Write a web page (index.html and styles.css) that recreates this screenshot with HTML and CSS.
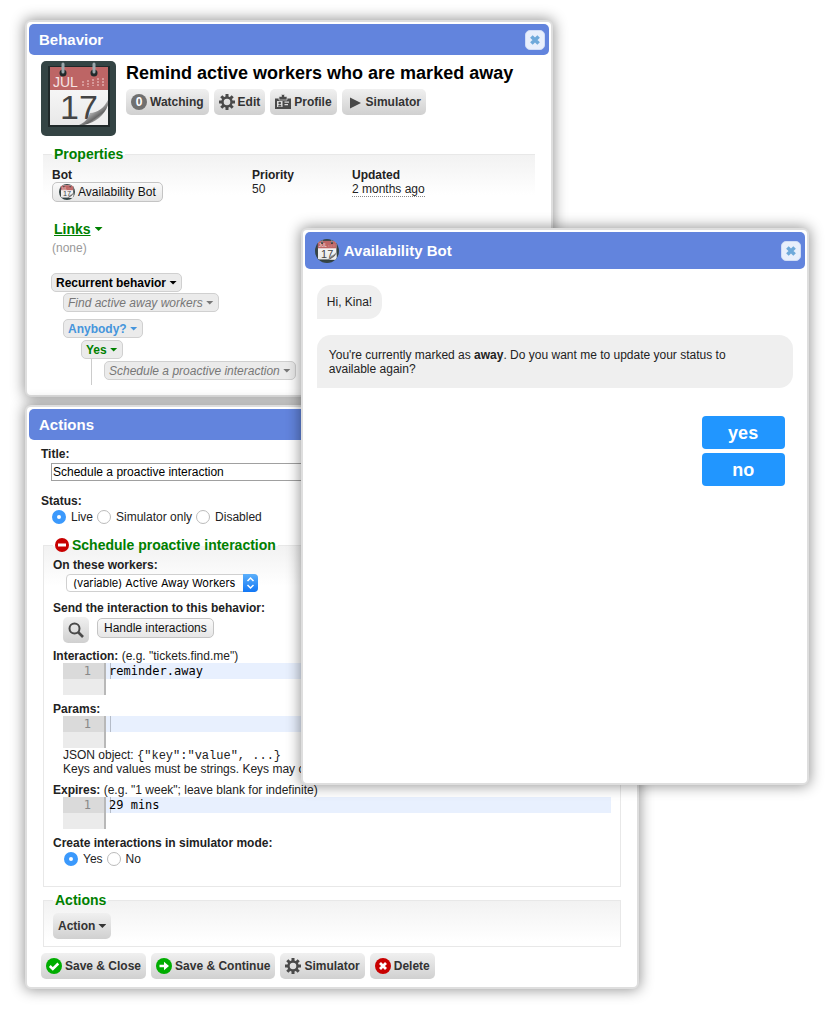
FILE: index.html
```html
<!DOCTYPE html>
<html lang="en">
<head>
<meta charset="utf-8">
<title>Behavior</title>
<link rel="stylesheet" href="styles.css">
</head>
<body>
<svg class="defs" aria-hidden="true">
  <defs>
    <linearGradient id="paper" x1="0" y1="0" x2="0" y2="1"><stop offset="0" stop-color="#fff"/><stop offset="1" stop-color="#e8e8e8"/></linearGradient>
    <linearGradient id="fold" x1="0.2" y1="0.2" x2="0.7" y2="0.8"><stop offset="0" stop-color="#e4e4e4"/><stop offset="0.5" stop-color="#aaa"/><stop offset="0.8" stop-color="#666"/><stop offset="1" stop-color="#ccc"/></linearGradient>
    <symbol id="calendar" viewBox="0 0 75 75">
      <rect width="75" height="75" fill="#344444"/>
      <rect x="7" y="5" width="62" height="61" fill="#20292a"/>
      <rect x="9" y="6" width="58" height="58" fill="url(#paper)"/>
      <rect x="9" y="6" width="58" height="23" fill="#bd6565"/>
      <text x="12" y="26" class="cal-month">JUL</text>
      <g stroke="#d79a9a" stroke-width="2" stroke-dasharray="2 1"><path d="M42 20v6M47 19v7M52 18v7M57 17v8M62 17v8"/></g>
      <text x="19" y="58" class="cal-day">17</text>
      <path d="M38 64C45 61 47 57 49 52C56 52 63 47 67 39V64Z" fill="url(#fold)"/>
      <path d="M43 64C55 61 63 55 67 44V64Z" fill="#efefef"/>
      <circle cx="22" cy="12" r="3.500" fill="#20292a"/><circle cx="53" cy="12" r="3.500" fill="#20292a"/>
      <path d="M22 3v8M53 3v8" stroke="#9aa6ab" stroke-width="3" stroke-linecap="round"/>
    </symbol>
    <symbol id="gear" viewBox="0 0 16 16">
      <g stroke="#4a4a4a" stroke-width="3"><path d="M8 0v4M8 12v4M0 8h4M12 8h4M2.300 2.300l3 3M10.700 10.700l3 3M13.700 2.300l-3 3M5.300 10.700l-3 3"/></g>
      <circle cx="8" cy="8" r="4.500" fill="none" stroke="#4a4a4a" stroke-width="2.400"/>
    </symbol>
    <symbol id="cross" viewBox="0 0 10 10"><path d="M2 2l6 6M8 2l-6 6" stroke="currentColor" stroke-width="3"/></symbol>
  </defs>
</svg>
<main class="desktop">

<section class="window window-behavior">
  <header class="titlebar"><h2>Behavior</h2><button class="close" aria-label="Close"><svg><use href="#cross"/></svg></button></header>
  <div class="window-body">
    <div class="record">
      <svg class="record-icon"><use href="#calendar"/></svg>
      <div>
        <h1>Remind active workers who are marked away</h1>
        <div class="toolbar">
          <button class="btn"><span class="count">0</span>Watching</button>
          <button class="btn"><svg class="icon"><use href="#gear"/></svg>Edit</button>
          <button class="btn"><svg class="icon" viewBox="0 0 16 16"><path d="M0 4.500h16V15H0z" fill="#4a4a4a"/><path d="M4 2.500h2.500v-2h3v2H12V6H4z" fill="#4a4a4a" stroke="#dedede" stroke-width=".7"/><path d="M2 7h5.500v6H2zM9.500 7.500H14v1.200H9.500zM9.500 10H13v1.200H9.500z" fill="#ddd"/><circle cx="4.700" cy="9" r="1.300" fill="#4a4a4a"/><path d="M3 12.500c0-2.400 3.500-2.400 3.500 0z" fill="#4a4a4a"/></svg>Profile</button>
          <button class="btn"><svg class="icon" viewBox="0 0 16 16"><path d="M3 3.500v11l11-5.500z" fill="#4a4a4a"/></svg>Simulator</button>
        </div>
      </div>
    </div>
    <fieldset class="group group-open">
      <legend>Properties</legend>
      <div class="properties">
        <div><b>Bot</b><button class="bubble"><svg class="avatar-small"><use href="#calendar"/></svg>Availability Bot</button></div>
        <div><b>Priority</b><span>50</span></div>
        <div><b>Updated</b><abbr>2 months ago</abbr></div>
      </div>
    </fieldset>
    <div class="links">
      <a href="#links"><span>Links</span><i class="caret"></i></a>
      <p>(none)</p>
    </div>
    <div class="tree">
      <button class="node node-root">Recurrent behavior<i class="caret"></i></button>
      <div class="branch">
        <button class="node node-action">Find active away workers<i class="caret"></i></button>
        <button class="node node-decision">Anybody?<i class="caret"></i></button>
        <div class="outcome">
          <button class="node node-yes">Yes<i class="caret"></i></button>
          <div class="outcome-body"><button class="node node-action">Schedule a proactive interaction<i class="caret"></i></button></div>
        </div>
      </div>
    </div>
  </div>
</section>

<section class="window window-actions">
  <header class="titlebar"><h2>Actions</h2></header>
  <form class="window-body form">
    <label class="label" for="title">Title:</label>
    <input class="text" id="title" type="text" value="Schedule a proactive interaction">
    <b class="label label-status">Status:</b>
    <div class="radios">
      <label><input type="radio" name="status" checked>Live</label>
      <label><input type="radio" name="status">Simulator only</label>
      <label><input type="radio" name="status">Disabled</label>
    </div>
    <fieldset class="group group-action">
      <legend><svg class="minus" viewBox="0 0 14 14"><circle cx="7" cy="7" r="7" fill="#c80000"/><path d="M3 5.500h8v3H3z" fill="#fff"/></svg>Schedule proactive interaction</legend>
      <div class="field">
        <label class="label" for="workers">On these workers:</label>
        <div class="indent select">
          <select id="workers"><option>(variable) Active Away Workers</option></select>
          <svg viewBox="0 0 15 18"><path d="M4.500 7l3-3 3 3M4.500 11l3 3 3-3" fill="none" stroke="#fff" stroke-width="1.500"/></svg>
        </div>
      </div>
      <div class="field">
        <b class="label">Send the interaction to this behavior:</b>
        <div class="indent chooser">
          <button type="button" class="btn btn-search" aria-label="Search"><svg class="icon" viewBox="0 0 16 16"><circle cx="6.500" cy="6.500" r="5" fill="none" stroke="#4a4a4a" stroke-width="2"/><path d="M10 10l5 5" stroke="#4a4a4a" stroke-width="2.600"/></svg></button>
          <button type="button" class="bubble">Handle interactions</button>
        </div>
      </div>
      <div class="field field-first-editor">
        <label class="label" for="interaction">Interaction: <span>(e.g. "tickets.find.me")</span></label>
        <div class="indent editor"><span class="gutter"><span>1</span></span><input id="interaction" type="text" value="reminder.away"></div>
      </div>
      <div class="field">
        <label class="label" for="params">Params:</label>
        <div class="indent editor"><span class="gutter"><span>1</span></span><input id="params" type="text"></div>
        <p class="indent">JSON object: <code>{"key":"value", ...}</code></p>
        <p class="indent">Keys and values must be strings. Keys may only</p>
      </div>
      <div class="field">
        <label class="label" for="expires">Expires: <span>(e.g. "1 week"; leave blank for indefinite)</span></label>
        <div class="indent editor"><span class="gutter"><span>1</span></span><input id="expires" type="text" value="29 mins"></div>
      </div>
      <div class="field">
        <b class="label">Create interactions in simulator mode:</b>
        <div class="radios">
          <label><input type="radio" name="sim" checked>Yes</label>
          <label><input type="radio" name="sim">No</label>
        </div>
      </div>
    </fieldset>
    <fieldset class="group group-add">
      <legend>Actions</legend>
      <button type="button" class="btn">Action<i class="caret"></i></button>
    </fieldset>
    <div class="toolbar toolbar-bottom">
      <button type="button" class="btn"><svg class="icon" viewBox="0 0 16 16"><circle cx="8" cy="8" r="8" fill="#00ad00"/><path d="M3.800 8l3 3 5.500-5.500" fill="none" stroke="#fff" stroke-width="2.500"/></svg>Save &amp; Close</button>
      <button type="button" class="btn"><svg class="icon" viewBox="0 0 16 16"><circle cx="8" cy="8" r="8" fill="#00ad00"/><path d="M3.500 6.700h4.500V3.800L13 8l-5 4.200V9.300H3.500z" fill="#fff"/></svg>Save &amp; Continue</button>
      <button type="button" class="btn"><svg class="icon"><use href="#gear"/></svg>Simulator</button>
      <button type="button" class="btn"><svg class="icon" viewBox="0 0 16 16"><circle cx="8" cy="8" r="8" fill="#c80000"/><path d="M5 5l6 6M11 5l-6 6" stroke="#fff" stroke-width="2.800"/></svg>Delete</button>
    </div>
  </form>
</section>

<section class="window window-chat">
  <header class="titlebar"><svg class="avatar"><use href="#calendar"/></svg><h2>Availability Bot</h2><button class="close" aria-label="Close"><svg><use href="#cross"/></svg></button></header>
  <div class="chat">
    <p class="message">Hi, Kina!</p>
    <p class="message message-wide">You're currently marked as <b>away</b>. Do you want me to update your status to available again?</p>
    <div class="replies"><button>yes</button><button>no</button></div>
  </div>
</section>

</main>
</body>
</html>
```

FILE: styles.css
```css
* { box-sizing: border-box; }
body { margin: 0; background: #fff; color: #222; font: 12px/14px "Liberation Sans", Arial, sans-serif; }
h1, h2, p { margin: 0; }
button, input, select { margin: 0; font: inherit; color: inherit; }
button { cursor: pointer; white-space: nowrap; }
.defs { position: absolute; width: 0; height: 0; }
.cal-month { font-size: 14px; fill: #f6e4e4; }
.cal-day { font-size: 34px; fill: #444; }

.desktop { position: relative; min-height: 1025px; overflow: hidden; }
.window { position: absolute; padding: 2px; background: #fff; border: 2px solid #dedede; border-radius: 6px; box-shadow: 0 0 14px 1px rgba(0, 0, 0, .42); }
.window-behavior { left: 25px; top: 20px; width: 63%; }
.window-actions { left: 25px; top: 405px; width: 73.300%; }
.window-chat { left: 35.900%; top: 228px; width: 60.600%; min-height: 557px; }

.titlebar { display: flex; align-items: center; height: 31px; padding: 0 4px 0 10px; background: #6284dd; color: #fff; border-radius: 5px; }
.titlebar h2 { flex: 1; font-size: 15px; line-height: 18px; }
.window-chat .titlebar { height: 37px; }
.close { display: flex; align-items: center; justify-content: center; width: 20px; height: 20px; padding: 0; border: 1px solid #cfdcf6; border-radius: 5px; background: #e8effc; color: #6ea9da; }
.close svg { width: 12px; height: 12px; }
.avatar { width: 24px; height: 24px; margin-right: 5px; border-radius: 50%; }
.window-body { padding: 6px 12px; }

.record { display: flex; gap: 10px; }
.record-icon { flex: none; width: 75px; height: 75px; border-radius: 5px; }
.record h1 { margin-bottom: 4px; color: #000; font-size: 18px; line-height: 24px; white-space: nowrap; }
.toolbar { display: flex; gap: 5px; }
.btn { display: inline-flex; align-items: center; gap: 3px; height: 26px; padding: 0 5px; border: 0; border-radius: 5px; background: linear-gradient(#f0f0f0, #d0d0d0); color: #333; font-weight: bold; }
.icon { width: 16px; height: 16px; flex: none; }
.count { width: 16px; height: 16px; border-radius: 50%; background: #707070; color: #fff; line-height: 16px; text-align: center; }

.group { min-width: 0; margin: 10px 2px 0; padding: 6px 9px 0; border: 1px solid #e8e8e8; background: linear-gradient(#f2f2f2, #fff 40px); }
.group-open { border-width: 1px 0 0; }
.group legend { display: flex; align-items: center; gap: 3px; padding: 0 2px; color: #008000; font-size: 14px; font-weight: bold; line-height: 16px; }
.properties { display: grid; grid-template-columns: 200px 100px 1fr; }
.properties > div { display: flex; flex-direction: column; align-items: flex-start; }
.properties abbr { border-bottom: 1px dotted #888; }
.bubble { display: inline-flex; align-items: center; gap: 3px; height: 20px; padding: 0 6px; border: 1px solid #c4c4c4; border-radius: 5px; background: linear-gradient(#fafafa, #e6e6e6); color: #111; }
.avatar-small { width: 16px; height: 16px; border-radius: 50%; }

.links { margin: 19px 0 18px 11px; }
.links a { display: inline-flex; align-items: center; gap: 4px; margin-left: 2px; color: #008000; font-size: 14px; font-weight: bold; line-height: 16px; text-decoration: none; }
.links a span { text-decoration: underline; }
.links p { margin-top: 4px; color: #999; }
.caret { width: 8px; height: 4px; background: currentColor; clip-path: polygon(0 0, 100% 0, 50% 100%); }

.tree { margin-left: 10px; padding-bottom: 2px; }
.tree .node { display: flex; align-items: center; gap: 3px; height: 19px; padding: 0 4px; border: 1px solid #d0d0d0; border-radius: 5px; background: #ebebeb; }
.tree .node-root { color: #000; font-weight: bold; }
.tree .node-action { color: #777; font-style: italic; }
.tree .node-decision { margin-top: 7px; color: #4595dc; font-weight: bold; }
.tree .node-yes { color: #008000; font-weight: bold; }
.branch { margin: 1px 0 0 12px; }
.outcome { margin: 2px 0 0 18px; }
.outcome-body { margin-left: 10px; padding: 2px 0 5px 12px; border-left: 1px solid #ccc; }

.form { padding-top: 7px; }
.label { display: block; font-weight: bold; }
.label span { font-weight: normal; }
.text { display: block; width: calc(100% - 12px); height: 18px; margin: 2px 0 0 10px; padding: 0 1px; border: 1px solid #a0a0a0; background: #fff; color: #000; }
.label-status { margin-top: 13px; }
.radios { display: flex; gap: 4px; margin: 2px 0 0 11px; }
.radios label { display: flex; align-items: center; gap: 5px; }
.radios input { appearance: none; width: 14px; height: 14px; border: 1px solid #bbb; border-radius: 50%; background: #fff; }
.radios input:checked { border: 5px solid #3b99fc; }
.group-action { margin-top: 13px; padding: 5px 9px 20px; }
.minus { width: 14px; height: 14px; }
.field + .field { margin-top: 7px; }
.field + .field-first-editor { margin-top: 6px; }
.indent { margin-left: 10px; }
.select { position: relative; width: 192px; margin: 2px 0 9px 13px; }
.select select { display: block; appearance: none; width: 100%; height: 18px; padding: 0 6px; border: 1px solid #d0d0d0; border-radius: 4px; background: #fff; color: #000; font: 11px/16px Inter, sans-serif; }
.select svg { position: absolute; top: 0; right: 0; width: 15px; height: 18px; border-radius: 0 4px 4px 0; background: linear-gradient(#5cb0fb, #1277f5); pointer-events: none; }
.chooser { display: flex; gap: 8px; margin-top: 2px; }
.btn-search { width: 26px; }
.chooser .bubble { margin-top: 1px; }
.editor { display: grid; grid-template-columns: 43px 1fr; height: 32px; font: 12px/16px "DejaVu Sans Mono", monospace; }
.gutter { border-right: 2px solid #b8b8b8; background: #ebebeb; color: #888; text-align: right; }
.gutter span { display: block; padding-right: 13px; background: #dadada; }
.editor input { width: 100%; height: 16px; padding: 0 0 0 3px; border: 0; background: linear-gradient(#b5bcc8, #b5bcc8) 4px 0 / 1px 100% no-repeat #e8f0fe; color: #000; }
code { font-family: "Liberation Mono", monospace; font-size: 12px; line-height: 12px; }
.group-add { margin-top: 5px; padding: 5px 9px 7px; }
.toolbar-bottom { margin-top: 6px; }

.chat { padding: 16px 12px; }
.message { width: fit-content; padding: 10px; border-radius: 14px 14px 14px 0; background: #efefef; }
.message-wide { width: auto; margin-top: 16px; padding: 13px 24px 12px 12px; }
.replies { display: flex; flex-direction: column; align-items: flex-end; gap: 4px; margin: 28px 8px 0 0; }
.replies button { width: 83px; height: 33px; border: 0; border-radius: 4px; background: #2196ff; color: #fff; font-size: 18px; font-weight: bold; }
```
